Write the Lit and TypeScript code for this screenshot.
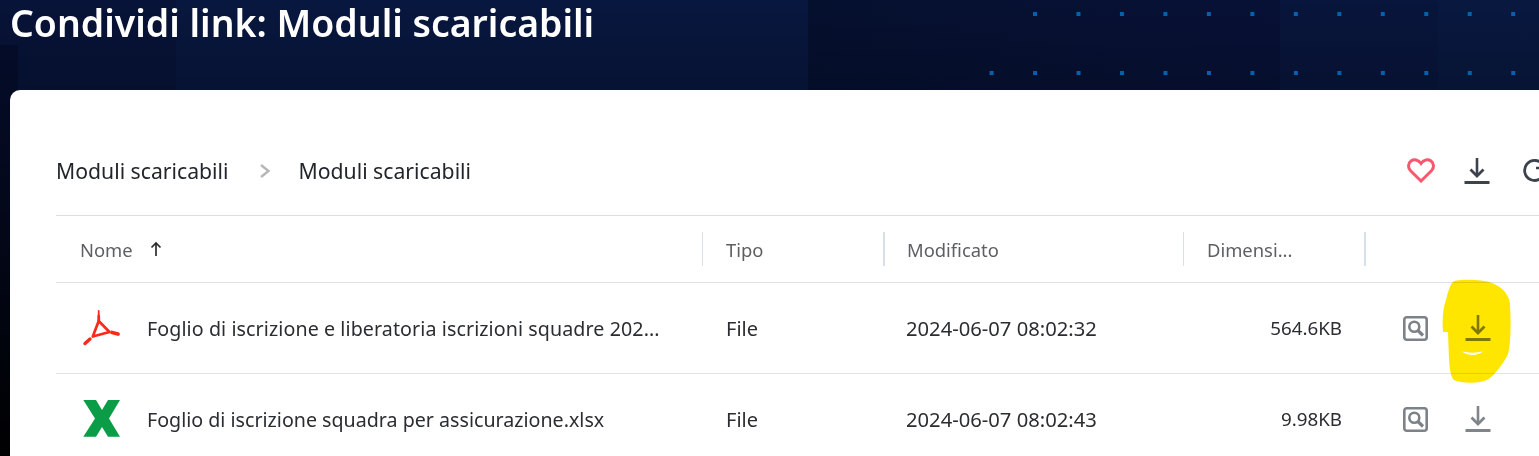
import { LitElement, html, css, svg } from "lit";
import { customElement } from "lit/decorators.js";

const dl = (cls: string) => html`<svg class=${cls} viewBox="0 0 26 26" width="26" height="26" fill="none" stroke="currentColor">
  <path d="M13 0V18" stroke-width="2.6"/><path d="M6.5 11.5L13 18L19.5 11.5" stroke-width="2.8"/><path d="M0.5 24.5H25.5" stroke-width="3"/></svg>`;
const lens = html`<svg class="lens" viewBox="0 0 25 25" width="25" height="25" fill="none" stroke="#7d8188">
  <rect x="1.3" y="1.3" width="22.4" height="22.4" rx="2.5" stroke-width="2.6"/><circle cx="11.3" cy="10.8" r="5" stroke-width="2.6"/><path d="M15 14.5L20 19.5" stroke-width="3.2"/></svg>`;
const pdf = html`<svg class="ficon" viewBox="0 0 40 40" width="40" height="40" fill="none">
  <g stroke="#fb2a1a" stroke-linecap="round">
    <path d="M16.7 3V7" stroke-width="1.8"/><path d="M16.7 8V12.5" stroke-width="2.8"/>
    <path d="M16.7 13L27.5 24L10.8 28.5L16.7 13Z" stroke-width="2.7" stroke-linejoin="round"/>
    <path d="M30 24.5L36 26" stroke-width="3.8"/><path d="M8 31L3 35.5" stroke-width="3.4"/>
  </g></svg>`;
const xls = html`<svg class="ficon" viewBox="0 0 40 40" width="40" height="40">
  <path fill="#0b9c47" d="M1.3 1H14L20 11L26 1H38L27 19.5L38 37.7H26L20 28L14 37.7H1.3L13 19.5Z"/></svg>`;

const rows = [
  { icon: pdf, long: true, name: "Foglio di iscrizione e liberatoria iscrizioni squadre 202...", date: "2024-06-07 08:02:32", size: "564.6KB" },
  { icon: xls, long: false, name: "Foglio di iscrizione squadra per assicurazione.xlsx", date: "2024-06-07 08:02:43", size: "9.98KB" },
];

@customElement("app-root")
export class AppRoot extends LitElement {
  static styles = css`
    :host {
      display: block; position: relative; width: 100%; height: 456px; overflow: hidden;
      font-family: "Noto Sans", "Open Sans", sans-serif; color: #262a30;
      background-color: #07133a;
      background-image:
        linear-gradient(180deg, rgba(0,0,0,0) 0, rgba(0,0,0,.18) 90px, rgba(0,0,0,.5) 250px, rgba(0,0,0,.97) 456px),
        linear-gradient(180deg, #0000 45px, #050d2c 45px),
        linear-gradient(90deg, #071338 0, #071338 176px, #08173f 176px, #08173f 808px, #05102f 808px, #071136 1280px, #08153c 1280px, #08153c 1438px, #08183f 1438px, #08183f 100%);
      background-size: 100% 100%, 18px 100%, 100% 100%;
      background-repeat: no-repeat;
    }
    .dots { position: absolute; left: 0; top: 0; right: 0; height: 90px; pointer-events: none; }
    h1 { margin: 0; padding: 0 0 0 10px; height: 90px; box-sizing: border-box; font-size: 37.4px; line-height: 46px; font-weight: 600; color: #fff; position: relative; white-space: nowrap; }
    .card { background: #fff; border-radius: 10px 0 0 0; margin-left: 10px; width: 1640px; height: 366px; box-sizing: border-box; padding: 0 0 0 46px; }
    .bar { height: 126px; display: flex; align-items: center; border-bottom: 1px solid #dcdde3; box-sizing: border-box; padding-top: 36px; }
    .crumb { font-size: 21.2px; color: #22262c; white-space: nowrap; }
    .sep { width: 12px; height: 16px; margin: 0 28px 0 30px; color: #b4b6b9; }
    .tools { margin-left: auto; display: flex; align-items: center; width: 232px; gap: 29px; color: #3c434d; padding-right: 11px; }
    .refresh { margin-left: 3px; flex: none; }
    .head, .row { display: grid; grid-template-columns: 646px 181px 300px 181px 275px; align-items: center; }
    .head { height: 67px; border-bottom: 1px solid #dfe1e8; box-sizing: border-box; font-size: 18.4px; color: #5c5f64; }
    .th { height: 34px; display: flex; align-items: center; padding-left: 24px; box-sizing: border-box; }
    .th + .th { border-left: 1px solid #d8e0ea; padding-left: 23px; }
    .th.thick { border-left-width: 2px; padding-left: 22px; }
    .arrow { margin-left: 17px; width: 12px; height: 16px; color: #2a2d31; }
    .row { height: 91px; border-bottom: 1px solid #e3e5ea; box-sizing: border-box; font-size: 19.65px; color: #2a2d32; }
    .namecell { display: flex; align-items: center; padding-left: 26px; gap: 25px; min-width: 0; }
    .ficon { flex: none; }
    .fname { white-space: nowrap; }
    .fname.long { letter-spacing: .09px; }
    .cell { padding-left: 24px; white-space: nowrap; }
    .type { font-size: 20px; }
    .date { font-size: 20.2px; padding-left: 23px; }
    .size { text-align: right; padding-right: 22px; font-size: 18.8px; }
    .acts { display: flex; align-items: center; gap: 37px; padding-left: 39px; color: #80848b; }
    .hl { position: absolute; left: 1440px; top: 278px; width: 72px; height: 106px; mix-blend-mode: multiply; pointer-events: none; }
    .curve { position: absolute; left: 1440px; top: 278px; width: 72px; height: 106px; pointer-events: none; }
  `;

  private dots() {
    const xs = (from: number, n: number) => Array.from({ length: n }, (_, i) => from + i * 43.47);
    return svg`<svg class="dots" width="1539" height="90">
      ${xs(1033, 12).map((x) => svg`<rect x=${x} y="12" width="4" height="4" fill="#0560b0"/>`)}
      ${xs(989.6, 13).map((x) => svg`<rect x=${x} y="71" width="4" height="4" fill="#0560b0"/>`)}
    </svg>`;
  }

  render() {
    return html`
      ${this.dots()}
      <h1>Condividi link: Moduli scaricabili</h1>
      <div class="card">
        <div class="bar">
          <span class="crumb">Moduli scaricabili</span>
          <svg class="sep" viewBox="0 0 12 16" fill="none" stroke="currentColor" stroke-width="2.4"><path d="M2 2L9.5 8L2 14"/></svg>
          <span class="crumb">Moduli scaricabili</span>
          <div class="tools">
            <svg viewBox="0 0 28 25" width="28" height="25" fill="none" stroke="#f9566f" stroke-width="3"><path d="M14 23L3.6 12.8C.6 9.6 1 5.2 4 3C7 .9 11.4 1.5 14 5.4C16.6 1.5 21 .9 24 3C27 5.2 27.4 9.6 24.4 12.8Z"/></svg>
            ${dl("tool")}
            <svg class="refresh" viewBox="0 0 24 24" width="24" height="24" fill="none" stroke="currentColor" stroke-width="2.8"><path d="M21 6A10 10 0 1 0 22.5 13"/><path d="M14 9H22V1.5" stroke-width="2.6"/></svg>
          </div>
        </div>
        <div class="head">
          <div class="th">Nome
            <svg class="arrow" viewBox="0 0 12 16" fill="none" stroke="currentColor" stroke-width="1.7"><path d="M6 15V2M1.5 6.5L6 2L10.5 6.5"/></svg>
          </div>
          <div class="th">Tipo</div>
          <div class="th thick">Modificato</div>
          <div class="th">Dimensi...</div>
          <div class="th thick"></div>
        </div>
        ${rows.map((r) => html`
          <div class="row">
            <div class="namecell">${r.icon}<span class="fname ${r.long ? "long" : ""}">${r.name}</span></div>
            <div class="cell type">File</div>
            <div class="cell date">${r.date}</div>
            <div class="size">${r.size}</div>
            <div class="acts">${lens}${dl("act")}</div>
          </div>`)}
      </div>
      <svg class="hl" viewBox="0 0 72 106"><path fill="#ffe600" d="M14 3C22 1 42 1 52 5C62 9 69 16 70 26C71 45 71 65 68 76C64 85 56 95 50 100C42 106 22 106 14 102C9 98 9 80 8 54L3 54C2 40 3 30 6 22C8 14 10 6 14 3Z"/></svg>
      <svg class="curve" viewBox="0 0 72 106"><path fill="#fff" d="M22 73.5C29 75 36 75 43 73.5C37 78 28 78 22 73.5Z"/></svg>
    `;
  }
}
